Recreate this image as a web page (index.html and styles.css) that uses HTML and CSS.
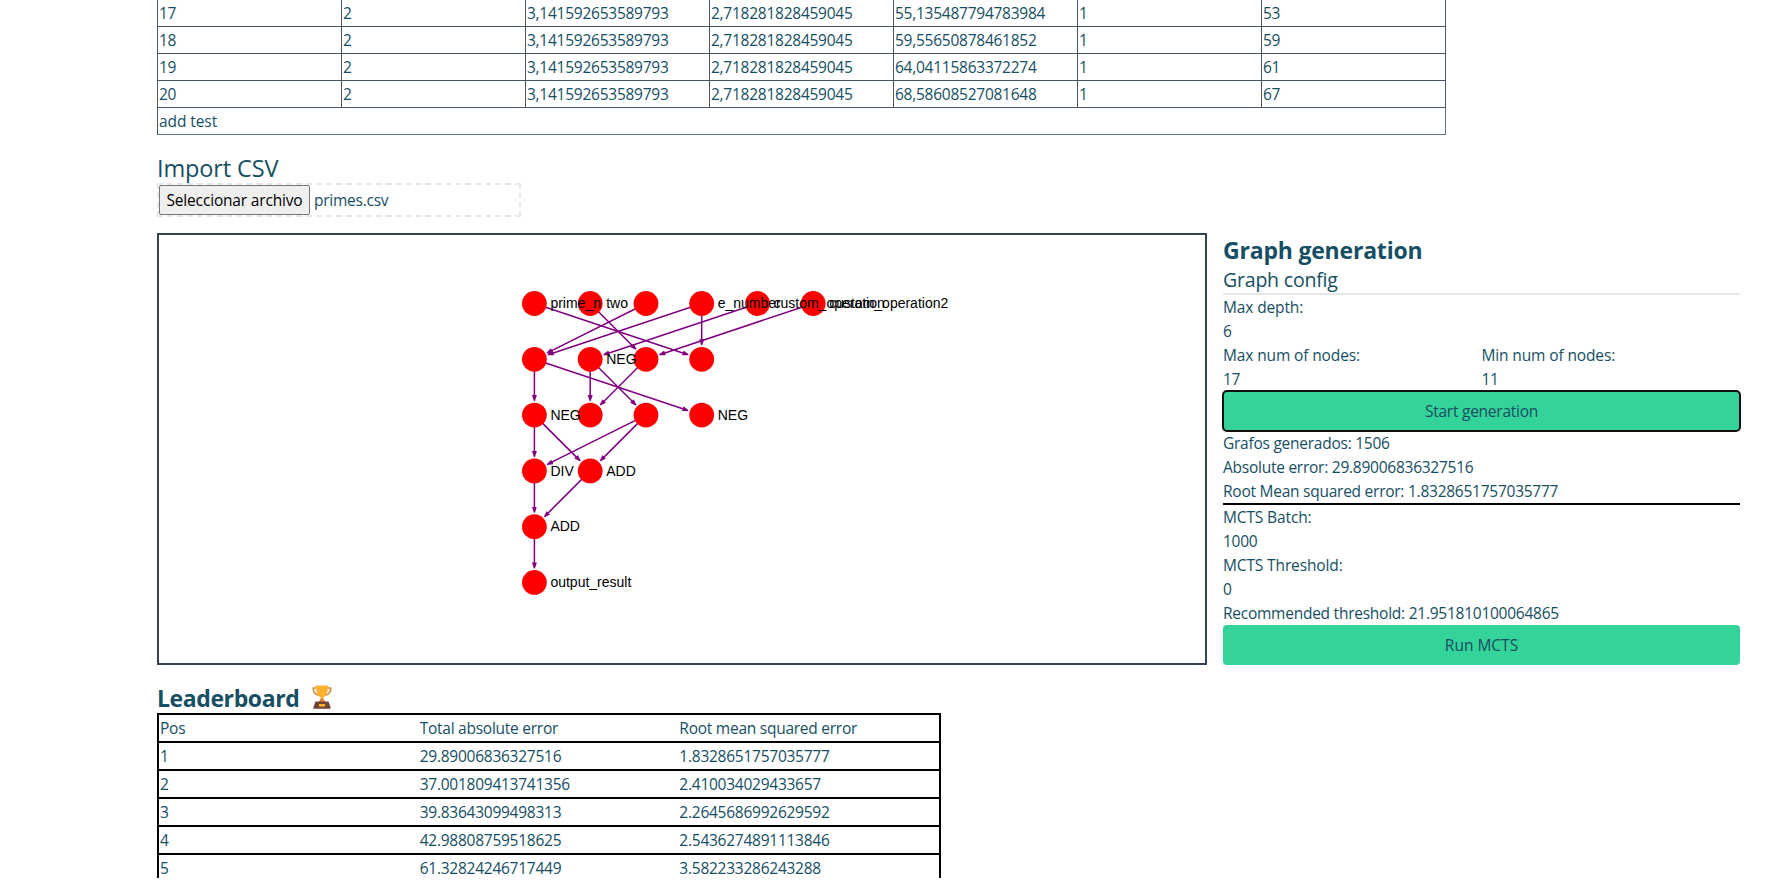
FILE: index.html
```html
<!DOCTYPE html>
<html lang="es">
<head>
<meta charset="utf-8">
<title>Graph generation</title>
<link rel="stylesheet" href="styles.css">
</head>
<body>
<main class="page">
  <table class="tests">
    <tr><td>17</td><td>2</td><td>3,141592653589793</td><td>2,718281828459045</td><td>55,135487794783984</td><td>1</td><td>53</td></tr>
    <tr><td>18</td><td>2</td><td>3,141592653589793</td><td>2,718281828459045</td><td>59,55650878461852</td><td>1</td><td>59</td></tr>
    <tr><td>19</td><td>2</td><td>3,141592653589793</td><td>2,718281828459045</td><td>64,04115863372274</td><td>1</td><td>61</td></tr>
    <tr><td>20</td><td>2</td><td>3,141592653589793</td><td>2,718281828459045</td><td>68,58608527081648</td><td>1</td><td>67</td></tr>
    <tr class="tests-add"><td colspan="7">add test</td></tr>
  </table>

  <section class="import">
    <h2 class="import-title">Import CSV</h2>
    <div class="file"><button class="file-button">Seleccionar archivo</button><span class="file-name">primes.csv</span></div>
  </section>

  <section class="work">
    <div class="canvas">
      <svg class="graph" viewBox="159 235 1046 428">
        <defs>
          <marker id="arrow" markerUnits="userSpaceOnUse" markerWidth="7" markerHeight="6" refX="4" refY="2.5" orient="auto"><path d="M0 0L6 2L6 3L0 5Z"/></marker>
        </defs>
        <g class="edges">
          <path d="M534.4 303.5L686.5 354.2"/>
          <path d="M590.2 303.5L634.7 348"/>
          <path d="M646 303.5L548.7 352.1"/>
          <path d="M701.7 303.5L549.6 354.2"/>
          <path d="M701.7 303.5V343.3"/>
          <path d="M757.5 303.5L605.4 354.2"/>
          <path d="M813.2 303.5L661.2 354.2"/>
          <path d="M534.4 359.3V399.1"/>
          <path d="M534.4 359.3L686.5 410"/>
          <path d="M590.2 359.3V399.1"/>
          <path d="M590.2 359.3L634.7 403.8"/>
          <path d="M646 359.3L601.5 403.8"/>
          <path d="M534.4 415.1V454.9"/>
          <path d="M534.4 415.1L578.9 459.6"/>
          <path d="M646 415.1L548.7 463.7"/>
          <path d="M646 415.1L601.5 459.6"/>
          <path d="M534.4 470.9V510.7"/>
          <path d="M590.2 470.9L545.7 515.4"/>
          <path d="M534.4 526.7V566.4"/>
        </g>
        <g class="nodes">
          <circle cx="534.4" cy="303.5" r="12.4"/><circle cx="590.2" cy="303.5" r="12.4"/><circle cx="646" cy="303.5" r="12.4"/><circle cx="701.7" cy="303.5" r="12.4"/><circle cx="757.5" cy="303.5" r="12.4"/><circle cx="813.2" cy="303.5" r="12.4"/>
          <circle cx="534.4" cy="359.3" r="12.4"/><circle cx="590.2" cy="359.3" r="12.4"/><circle cx="646" cy="359.3" r="12.4"/><circle cx="701.7" cy="359.3" r="12.4"/>
          <circle cx="534.4" cy="415.1" r="12.4"/><circle cx="590.2" cy="415.1" r="12.4"/><circle cx="646" cy="415.1" r="12.4"/><circle cx="701.7" cy="415.1" r="12.4"/>
          <circle cx="534.4" cy="470.9" r="12.4"/><circle cx="590.2" cy="470.9" r="12.4"/>
          <circle cx="534.4" cy="526.7" r="12.4"/>
          <circle cx="534.4" cy="582.4" r="12.4"/>
        </g>
        <g class="labels">
          <text x="550.4" y="308.2">prime_n</text><text x="606.2" y="308.2">two</text><text x="717.7" y="308.2">e_number</text><text x="773.5" y="308.2">custom_operation</text><text x="829.2" y="308.2">custom_operation2</text>
          <text x="606.2" y="364">NEG</text>
          <text x="550.4" y="420">NEG</text><text x="717.7" y="420">NEG</text>
          <text x="550.4" y="476">DIV</text><text x="606.2" y="476">ADD</text>
          <text x="550.4" y="531.2">ADD</text>
          <text x="550.4" y="587">output_result</text>
        </g>
      </svg>
    </div>
    <aside class="panel">
      <h1 class="panel-title">Graph generation</h1>
      <h2 class="panel-sub">Graph config</h2>
      <div class="label">Max depth:</div>
      <div>6</div>
      <div class="pair">
        <div><div class="label">Max num of nodes:</div><div>17</div></div>
        <div><div class="label">Min num of nodes:</div><div>11</div></div>
      </div>
      <button class="btn btn-focus">Start generation</button>
      <div>Grafos generados: 1506</div>
      <div>Absolute error: 29.89006836327516</div>
      <div class="rule">Root Mean squared error: 1.8328651757035777</div>
      <div class="label">MCTS Batch:</div>
      <div>1000</div>
      <div class="label">MCTS Threshold:</div>
      <div>0</div>
      <div>Recommended threshold: 21.951810100064865</div>
      <button class="btn btn-run">Run MCTS</button>
    </aside>
  </section>

  <section class="board">
    <h2 class="board-title"><span>Leaderboard</span>
      <svg class="trophy" viewBox="0 0 20 24">
        <path d="M5 3H1.2C1 7 3 9.500 7 10.500M15 3H18.800C19 7 17 9.500 13 10.500" fill="none" stroke="#d6883f" stroke-width="1.500"/>
        <path d="M4 .5H16C16 7 14.500 11 11.300 12.500V14L13 16.500H7L8.700 14V12.500C5.500 11 4 7 4 .5Z" fill="#ffb02e"/>
        <path d="M8.600 13.500H11.400L13.200 17H6.800Z" fill="#d6883f"/>
        <path d="M3.500 16.500H16.500L18.500 22V23.800H1.500V22Z" fill="#6d4534"/>
        <rect x="7" y="19" width="6" height="2.600" fill="#ffb02e"/>
      </svg>
    </h2>
    <div class="board-table">
      <div class="board-row"><span>Pos</span><span>Total absolute error</span><span>Root mean squared error</span></div>
      <div class="board-row"><span>1</span><span>29.89006836327516</span><span>1.8328651757035777</span></div>
      <div class="board-row"><span>2</span><span>37.001809413741356</span><span>2.410034029433657</span></div>
      <div class="board-row"><span>3</span><span>39.83643099498313</span><span>2.2645686992629592</span></div>
      <div class="board-row"><span>4</span><span>42.98808759518625</span><span>2.5436274891113846</span></div>
      <div class="board-row"><span>5</span><span>61.32824246717449</span><span>3.582233286243288</span></div>
    </div>
  </section>
</main>
</body>
</html>
```
FILE: styles.css
```css
* { box-sizing: border-box; }
body {
  margin: 0;
  background: #fff;
  color: #164e63;
  font-family: "Open Sans", "Noto Sans", sans-serif;
  font-size: 15.5px;
  line-height: 24px;
  letter-spacing: -0.25px;
}
h1, h2 { margin: 0; }
button { font-family: inherit; font-size: inherit; letter-spacing: inherit; line-height: 24px; margin: 0; }
.page { height: 878px; overflow: hidden; padding: 0 35px 0 157px; }

.tests { width: 1289px; table-layout: fixed; border-collapse: separate; border-spacing: 0; border-left: 1px solid #475569; }
.tests td { height: 27px; padding: 1px; border-right: 1px solid #475569; border-bottom: 1px solid #475569; }
.tests .tests-add td { border-color: #64748b; letter-spacing: -0.08px; }

.import { margin-top: 16px; }
.import-title { height: 32px; font-size: 23.5px; line-height: 34px; font-weight: 400; letter-spacing: -0.13px; }
.file { display: flex; align-items: center; gap: 4px; width: 364px; height: 34px; border: 2px dashed #e5e7eb; }
.file-button { width: 151px; height: 30px; padding: 0; border: 1px solid #767676; border-radius: 2px; background: #efefef; color: #000; letter-spacing: -0.17px; }

.work { display: flex; gap: 16px; margin-top: 16px; height: 432px; }
.canvas { width: 1050px; border: 2px solid #334155; }
.graph { display: block; width: 1046px; height: 428px; }
.edges path { fill: none; stroke: #800080; stroke-width: 1.5; marker-end: url(#arrow); }
#arrow path { fill: #800080; stroke: none; }
.labels text { font: 14px "Liberation Sans", Arial, sans-serif; letter-spacing: 0; fill: #000; }
.nodes circle { fill: #f00; }

.panel { width: 517px; }
.panel-title { height: 32px; font-size: 23px; line-height: 34px; letter-spacing: -0.2px; }
.panel-sub { height: 30px; font-size: 19.5px; line-height: 30px; font-weight: 400; letter-spacing: -0.2px; border-bottom: 2px solid #e5e7eb; }
.label { letter-spacing: -0.13px; }
.pair { display: grid; grid-template-columns: 1fr 1fr; }
.btn { display: block; width: 100%; height: 40px; padding: 0; border: 0; border-radius: 4px; background: #34d399; color: #164e63; }
.btn-focus { outline: 2px solid #101010; outline-offset: -1px; }
.btn-run { letter-spacing: 0; }
.rule { border-bottom: 2px solid #000; }

.board { margin-top: 16px; }
.board-title { display: flex; align-items: center; gap: 13px; height: 32px; font-size: 23px; line-height: 34px; letter-spacing: -0.4px; }
.board-title span { height: 32px; }
.trophy { width: 20px; height: 24px; }
.board-table { width: 784px; border: 2px solid #000; }
.board-row { display: grid; grid-template-columns: repeat(3, 1fr); height: 28px; padding: 1px 0 1px 1px; border-bottom: 2px solid #000; }
```
